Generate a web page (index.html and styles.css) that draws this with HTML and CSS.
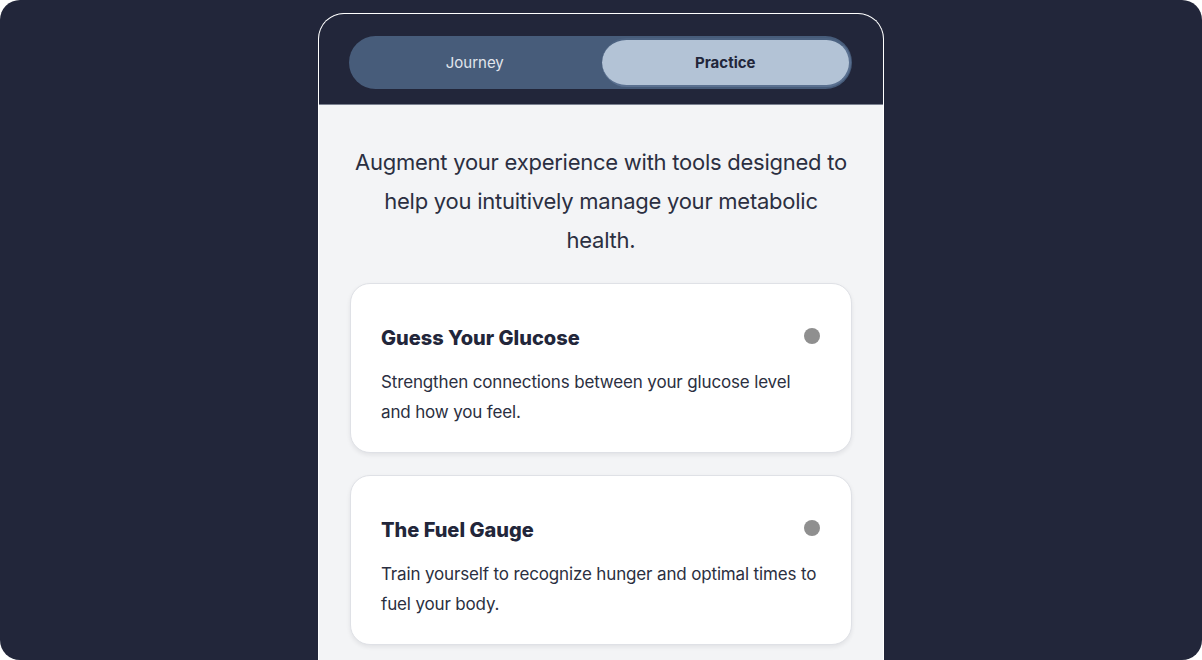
FILE: index.html
```html
<!DOCTYPE html>
<html lang="en">
<head>
<meta charset="utf-8">
<title>Practice</title>
<link rel="stylesheet" href="styles.css">
</head>
<body>
<div class="frame">
  <div class="phone">
    <header class="top">
      <div class="tabs">
        <button class="tab">Journey</button>
        <button class="tab is-active">Practice</button>
      </div>
    </header>
    <main class="content">
      <p class="intro">Augment your experience with tools designed to help you intuitively manage your metabolic health.</p>
      <section class="card">
        <div class="card-head">
          <h2 class="card-title">Guess Your Glucose</h2>
          <span class="dot"></span>
        </div>
        <p class="card-text">Strengthen connections between your glucose level and how you feel.</p>
      </section>
      <section class="card">
        <div class="card-head">
          <h2 class="card-title">The Fuel Gauge</h2>
          <span class="dot"></span>
        </div>
        <p class="card-text">Train yourself to recognize hunger and optimal times to fuel your body.</p>
      </section>
    </main>
  </div>
</div>
</body>
</html>
```
FILE: styles.css
```css
* { box-sizing: border-box; }

html, body {
  margin: 0;
  background: #ffffff;
}

body {
  font-family: Inter, "Liberation Sans", sans-serif;
  color: #272b3d;
}

.frame {
  width: 1202px;
  height: 660px;
  border-radius: 20px;
  background: #22263a;
  overflow: hidden;
  display: flex;
  justify-content: center;
  padding-top: 13px;
}

.phone {
  width: 566px;
  border: 1px solid #ffffff;
  border-bottom: none;
  border-radius: 26px 26px 0 0;
  overflow: hidden;
  background: #f3f4f6;
  display: flex;
  flex-direction: column;
}

.top {
  background: #22263a;
  padding: 22px 31px 15px 30px;
  border-bottom: 1px solid #7b8190;
}

.tabs {
  display: flex;
  height: 53px;
  padding: 2px 1px 2px 2px;
  border-radius: 27px;
  background: #475c7a;
}

.tab {
  flex: 1;
  border: none;
  background: transparent;
  border-radius: 25px;
  font-family: inherit;
  font-size: 15px;
  color: #e1e5ec;
  padding: 0 3px 0 0;
}

.tab.is-active {
  background: #b3c3d6;
  color: #22263a;
  font-weight: 700;
  border: 2px solid #5a7090;
  border-top-color: #4c6281;
  border-left: none;
  padding: 0;
}

.content {
  flex: 1;
  padding: 38px 31px 0;
}

.intro {
  margin: 0 0 23px;
  text-align: center;
  font-size: 22px;
  line-height: 39px;
  letter-spacing: -0.25px;
  color: #2b2f41;
}

.card {
  background: #ffffff;
  border: 1px solid #dfe1e6;
  border-radius: 20px;
  box-shadow: 0 2px 4px rgba(20, 24, 40, 0.08);
  padding: 41px 30px 25px;
  margin-bottom: 22px;
}

.card-head {
  display: flex;
  align-items: center;
  justify-content: space-between;
  height: 26px;
}

.card-title {
  margin: 0;
  font-size: 20px;
  font-weight: 800;
  color: #22263a;
}

.dot {
  width: 16px;
  height: 16px;
  border-radius: 50%;
  background: #8f8f8f;
  margin-right: 1px;
  margin-top: -4px;
}

.card-text {
  margin: 16px 0 0;
  font-size: 17px;
  line-height: 30px;
  letter-spacing: -0.15px;
  color: #2b2f41;
}
```
